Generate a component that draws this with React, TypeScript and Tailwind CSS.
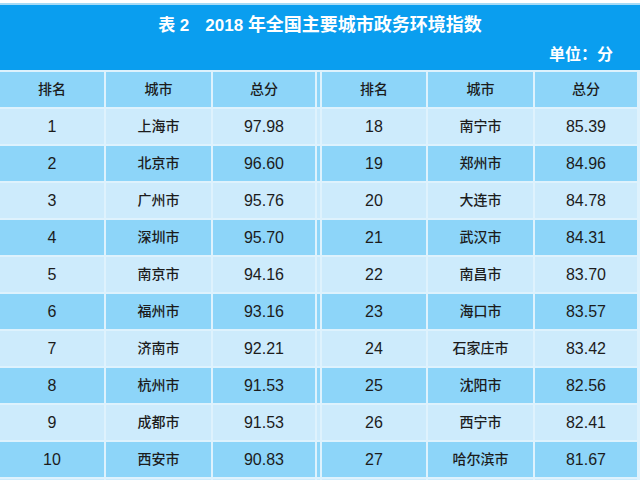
import React from "react";

const left = [
  ["1", "上海市", "97.98"],
  ["2", "北京市", "96.60"],
  ["3", "广州市", "95.76"],
  ["4", "深圳市", "95.70"],
  ["5", "南京市", "94.16"],
  ["6", "福州市", "93.16"],
  ["7", "济南市", "92.21"],
  ["8", "杭州市", "91.53"],
  ["9", "成都市", "91.53"],
  ["10", "西安市", "90.83"],
  ["", "", ""],
];
const right = [
  ["18", "南宁市", "85.39"],
  ["19", "郑州市", "84.96"],
  ["20", "大连市", "84.78"],
  ["21", "武汉市", "84.31"],
  ["22", "南昌市", "83.70"],
  ["23", "海口市", "83.57"],
  ["24", "石家庄市", "83.42"],
  ["25", "沈阳市", "82.56"],
  ["26", "西宁市", "82.41"],
  ["27", "哈尔滨市", "81.67"],
  ["", "", ""],
];

const font = { fontFamily: "'Liberation Sans', 'Noto Sans CJK SC', sans-serif" };

function Cell({ children, bg, cjk }: { children: React.ReactNode; bg: string; cjk?: boolean }) {
  return (
    <div
      className={`${bg} flex items-center justify-center text-[#1c1c1c] ${cjk ? "text-[14px] font-medium" : "text-[16px]"}`}
    >
      {children}
    </div>
  );
}

export default function App() {
  return (
    <div className="w-[640px] h-[480px] overflow-hidden bg-white" style={font}>
      <div className="h-[3px] bg-white" />
      <div className="h-[2px] bg-[#a6dbf6]" />
      <div className="h-[65px] bg-[#0a9eef] flex flex-col text-white font-semibold">
        <div className="h-[40px] flex items-center justify-center pt-[1px] gap-[16px]">
          <span className="text-[17px]">
            表 <span className="text-[17px]">2</span>
          </span>
          <span className="text-[17px]">
            2018 <span className="text-[18px]">年全国主要城市政务环境指数</span>
          </span>
        </div>
        <div className="flex justify-end pr-[27px] text-[16px] leading-none pt-[2px]">单位：分</div>
      </div>
      <div className="bg-[#def2fd] pt-[2px] flex flex-col gap-y-[2px]">
        <div className="grid grid-cols-[104px_105px_102px_3px_104px_105px_102px] gap-x-[2px] h-[35px]">
          {["排名", "城市", "总分"].map((t) => (
            <Cell key={"l" + t} bg="bg-[#8dd5f9]" cjk>
              {t}
            </Cell>
          ))}
          <div className="bg-[#8dd5f9]" />
          {["排名", "城市", "总分"].map((t) => (
            <Cell key={"r" + t} bg="bg-[#8dd5f9]" cjk>
              {t}
            </Cell>
          ))}
        </div>
        {left.map((l, i) => {
          const r = right[i];
          const bg = i % 2 === 0 ? "bg-[#cdebfc]" : "bg-[#8dd5f9]";
          return (
            <div
              key={i}
              className="grid grid-cols-[104px_105px_102px_3px_104px_105px_102px] gap-x-[2px] h-[35px] shrink-0"
            >
              <Cell bg={bg}>{l[0]}</Cell>
              <Cell bg={bg} cjk>
                {l[1]}
              </Cell>
              <Cell bg={bg}>{l[2]}</Cell>
              <div className={bg} />
              <Cell bg={bg}>{r[0]}</Cell>
              <Cell bg={bg} cjk>
                {r[1]}
              </Cell>
              <Cell bg={bg}>{r[2]}</Cell>
            </div>
          );
        })}
      </div>
    </div>
  );
}
